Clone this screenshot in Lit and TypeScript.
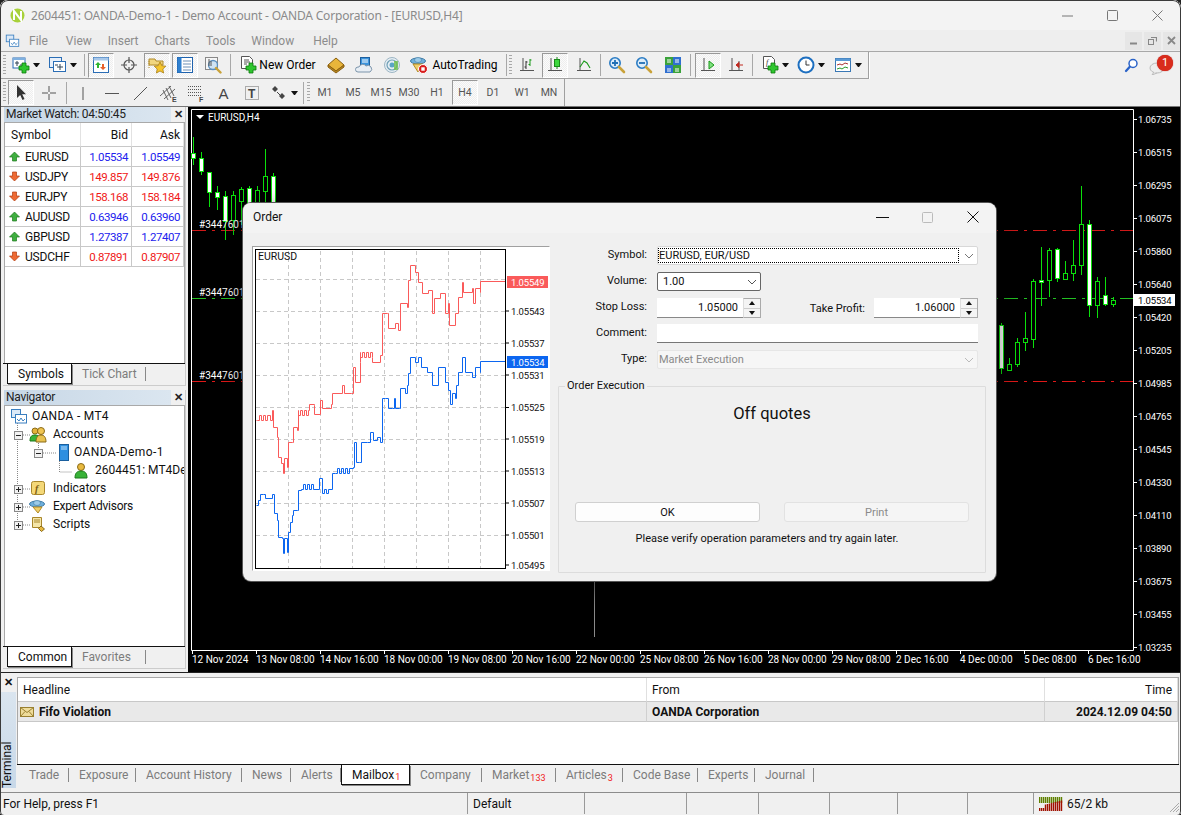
import { LitElement, html, css, svg } from "lit";

const ic = (b: any, size = 18) => html`<svg class="ic" width=${size} height=${size} viewBox="0 0 18 18">${b}</svg>`;
const plus = (x: number, y: number) => svg`<path d="M${x + 3} ${y}h4v3h3v4h-3v3h-4v-3h-3v-4h3z" fill="#2fc62f" stroke="#0a7a0a" stroke-width=".8"/>`;
const win = svg`<rect x="1" y="2" width="12" height="10" fill="#fff" stroke="#2a6db5"/><rect x="1" y="2" width="12" height="2" fill="#7fb0e0"/>`;
const glass = (inner: any) => svg`<circle cx="7" cy="7" r="5.2" fill="#dcecf9" stroke="#2b7cc4" stroke-width="1.6"/>${inner}<path d="M11 11l5 5" stroke="#c9a23a" stroke-width="2.6" stroke-linecap="round"/>`;
const axes = svg`<path d="M5 2v13M2 14.500h14" stroke="#555" fill="none"/>`;

const icons: Record<string, any> = {
  newChart: ic(svg`${win}<path d="M3 7h4M5 5v5M8 9h3" stroke="#345" />${plus(7, 7)}`),
  profiles: ic(svg`<rect x="0.500" y="1.500" width="12" height="10" fill="#e8f0fa" stroke="#2a6db5"/><rect x="4.500" y="5.500" width="12" height="10" fill="#fff" stroke="#2a6db5"/><path d="M6 9h3M8 11h6M11 8v6" stroke="#345"/>`),
  market: ic(svg`<rect x="1.500" y="1.500" width="15" height="15" fill="#fff" stroke="#2a6db5"/><rect x="1.500" y="1.500" width="15" height="3" fill="#a8c8ea"/><path d="M6 6l3 3h-2v3h-2v-3h-2z" fill="#2fb52f"/><path d="M11 14l-3-3h2v-3h2v3h2z" fill="#e8602a"/>`),
  target: ic(svg`<circle cx="9" cy="9" r="5" fill="none" stroke="#555" stroke-width="1.2"/><path d="M9 1v6M9 11v6M1 9h6M11 9h6" stroke="#555" stroke-width="1.2"/>`),
  folder: ic(svg`<path d="M1 3h6l1 2h7v4H1z" fill="#f1d680" stroke="#b08a2a"/><path d="M1 5v7" stroke="#b08a2a" stroke-dasharray="1 1"/><path d="M12 6l1.800 3.700 4 .5-3 2.800.8 4-3.600-2-3.600 2 .8-4-3-2.800 4-.5z" fill="#f5c52e" stroke="#a97f15" stroke-width=".8"/>`),
  list: ic(svg`<rect x="1.500" y="1.500" width="15" height="15" fill="#fff" stroke="#1f62ad"/><rect x="1.500" y="1.500" width="4" height="15" fill="#2f80d0"/><path d="M7 5h8M7 8h8M7 11h8M7 14h8" stroke="#6a8fb5"/>`),
  chartZoom: ic(svg`<rect x="1.500" y="1.500" width="12" height="12" fill="#f6f6f6" stroke="#888"/><circle cx="9" cy="9" r="4.500" fill="#cfe3f4" stroke="#5a8fc0" stroke-width="1.300"/><path d="M12 12l4.500 4.500" stroke="#c9a23a" stroke-width="2.400" stroke-linecap="round"/><path d="M5 3v7M7 5v5" stroke="#555"/>`),
  newOrder: ic(svg`<path d="M2.500 .5h8l3 3v9h-11z" fill="#fff" stroke="#555"/><path d="M5 4h5M5 6h6M5 8h3" stroke="#555"/>${plus(7, 7)}`),
  book: ic(svg`<path d="M1 9l8-7 8 7-8 6z" fill="#e8b53a" stroke="#8a5f10"/><path d="M1 9v2l8 6 8-6V9l-8 6z" fill="#b98a20" stroke="#8a5f10"/>`),
  cloud: ic(svg`<rect x="5.500" y="1.500" width="9" height="10" fill="#3b93dc" stroke="#1d5f9e"/><path d="M7 4h6M7 6h6" stroke="#fff"/><path d="M3 16a2.500 2.500 0 0 1 0-5h1a4 4 0 0 1 7-1 3.500 3.500 0 0 1 4 6z" fill="#e8eef4" stroke="#7d95ab"/>`),
  radio: ic(svg`<circle cx="9" cy="9" r="7.500" fill="#e6eef4" stroke="#9db6c4"/><circle cx="9" cy="9" r="5" fill="none" stroke="#6f9fb5" stroke-width="1.200"/><circle cx="9" cy="9" r="2.500" fill="#5aa5c5"/><path d="M11 5h4v9h-4z" fill="#6fc04a" opacity=".8"/>`),
  auto: ic(svg`<ellipse cx="8" cy="5" rx="7.500" ry="3" fill="#6fb0dc" stroke="#3d7aa5"/><ellipse cx="8" cy="4" rx="3.500" ry="2.500" fill="#9ccbe8" stroke="#3d7aa5" stroke-width=".6"/><path d="M3 8l5 8 5-8z" fill="#f0cf6a" stroke="#b28a25"/><circle cx="13" cy="13" r="4.500" fill="#d81e1e" stroke="#fff"/><rect x="11.300" y="11.300" width="3.400" height="3.400" fill="#fff"/>`),
  bar: ic(svg`${axes}<path d="M8 5v8M6.500 11H8M8 6h1.500" stroke="#333" fill="none"/><path d="M12 3v7M10.500 8.500H12M12 4h1.500" stroke="#1b9a1b" fill="none"/>`),
  candle: ic(svg`${axes}<path d="M11 1v12" stroke="#1a8a1a"/><rect x="8.500" y="3.500" width="5" height="7" fill="#3ed83e" stroke="#1a8a1a"/>`),
  line: ic(svg`${axes}<path d="M5 11l4-6 3 2 3 5" stroke="#1b9a1b" fill="none" stroke-width="1.100"/>`),
  zoomIn: ic(glass(svg`<path d="M7 4v6M4 7h6" stroke="#1f6fb5" stroke-width="1.800"/>`)),
  zoomOut: ic(glass(svg`<path d="M4 7h6" stroke="#1f6fb5" stroke-width="1.800"/>`)),
  tile: ic(svg`<rect x="1" y="1" width="8" height="8" fill="#3aa23a"/><rect x="9" y="1" width="8" height="8" fill="#2f6fd0"/><rect x="1" y="9" width="8" height="8" fill="#2f6fd0"/><rect x="9" y="9" width="8" height="8" fill="#3aa23a"/><path d="M3 4h4M11 4h4M3 13h4M11 13h4M3 6h4M11 6h4M3 15h4M11 15h4" stroke="#fff"/>`),
  shift: ic(svg`${axes}<path d="M10 5l5 4-5 4z" fill="#7fe07f" stroke="#1b9a1b"/>`),
  scroll: ic(svg`${axes}<path d="M12 5v9" stroke="#555"/><path d="M16 9h-3M9 9l3-2.500v5z" fill="#c0281e" stroke="#c0281e"/>`),
  newDoc: ic(svg`<path d="M2.500 .5h8l3 3v9h-11z" fill="#fff" stroke="#555"/><text x="5" y="9" font-size="8" font-style="italic" font-family="Liberation Serif" fill="#333">f</text>${plus(7, 7)}`),
  clock: ic(svg`<circle cx="9" cy="9" r="7.500" fill="#fff" stroke="#1d6fc0" stroke-width="2"/><path d="M9 4.500V9h3.500" stroke="#333" fill="none"/>`),
  indicators: ic(svg`<rect x="1.500" y="2.500" width="15" height="13" fill="#fff" stroke="#3a78b5"/><rect x="1.500" y="2.500" width="15" height="2.500" fill="#5b9ad5"/><path d="M3 9l3-1 2 1 3-2 3 1" stroke="#a33" fill="none"/><path d="M3 13l3-1 2 1 3-2 3 1" stroke="#2a9a2a" fill="none"/>`),
  search: ic(svg`<circle cx="11" cy="6.500" r="4" fill="#fff" stroke="#2a63c8" stroke-width="1.500"/><path d="M7.800 9.800L4 14" stroke="#2a63c8" stroke-width="2.300" stroke-linecap="round"/>`),
  cursor: ic(svg`<path d="M5 1v13l3.200-3 2.300 5 2-1-2.300-4.800H14z" fill="#333"/>`),
  cross: ic(svg`<path d="M9 2v6M9 10v6M2 9h6M10 9h6" stroke="#555"/>`),
  vline: ic(svg`<path d="M9 3v13" stroke="#555"/>`),
  hline: ic(svg`<path d="M2 9.500h14" stroke="#555"/>`),
  tline: ic(svg`<path d="M3 16L16 3" stroke="#555"/>`),
  channel: ic(svg`<path d="M1 12L12 2M5 15L16 5M4 6l5 10M7 4l5 10M10 2l5 10" stroke="#555" fill="none" stroke-width=".9"/><text x="13" y="18" font-size="7" font-weight="bold" font-family="Liberation Sans" fill="#444">E</text>`),
  fibo: ic(svg`<path d="M1 2.500h14M1 5.500h14M1 8.500h14M1 11.500h14" stroke="#555" stroke-dasharray="1 1"/><text x="12" y="18" font-size="7" font-weight="bold" font-family="Liberation Sans" fill="#444">F</text>`),
  atext: ic(svg`<text x="3.500" y="15" font-size="15" font-family="Liberation Sans" fill="#444">A</text>`),
  ttext: ic(svg`<rect x="2.500" y="2.500" width="13" height="13" fill="none" stroke="#666" stroke-dasharray="1 1"/><text x="5" y="14" font-size="12" font-weight="bold" font-family="Liberation Sans" fill="#444">T</text>`),
  arrows: ic(svg`<path d="M2 5l3-3 3 3-3 3zM9 12l3-3 3 3-3 3z" fill="#444"/><path d="M7 8l3 3" stroke="#444"/>`),
};

type Item = { x: number; w?: number; k?: string; ic?: string; on?: boolean; t?: string };
const tb1: Item[] = [
  { x: 4, k: "grip" }, { x: 21, ic: "newChart" }, { x: 36, k: "caret" }, { x: 58, ic: "profiles" }, { x: 73, k: "caret" }, { x: 84, k: "sep" },
  { x: 101, ic: "market", on: true }, { x: 129, ic: "target" }, { x: 157, ic: "folder", on: true }, { x: 185, ic: "list", on: true }, { x: 213, ic: "chartZoom" }, { x: 230, k: "sep" },
  { x: 248, ic: "newOrder" }, { x: 287.500, t: "New Order", w: 58 }, { x: 336, ic: "book" }, { x: 364, ic: "cloud" }, { x: 392, ic: "radio" }, { x: 419, ic: "auto" }, { x: 465, t: "AutoTrading", w: 68 },
  { x: 506, k: "sep" }, { x: 510, k: "grip" }, { x: 527, ic: "bar" }, { x: 555, ic: "candle", on: true }, { x: 584, ic: "line" }, { x: 600, k: "sep" },
  { x: 617, ic: "zoomIn" }, { x: 644, ic: "zoomOut" }, { x: 673, ic: "tile" }, { x: 690, k: "sep" }, { x: 708, ic: "shift", on: true }, { x: 736, ic: "scroll" }, { x: 752, k: "sep" },
  { x: 770, ic: "newDoc" }, { x: 785, k: "caret" }, { x: 806, ic: "clock" }, { x: 821, k: "caret" }, { x: 843, ic: "indicators" }, { x: 858, k: "caret" },
];
const tb2: Item[] = [
  { x: 4, k: "grip" }, { x: 21, ic: "cursor", on: true }, { x: 49, ic: "cross" }, { x: 66, k: "sep" }, { x: 83, ic: "vline" }, { x: 112, ic: "hline" }, { x: 140, ic: "tline" },
  { x: 168, ic: "channel" }, { x: 196, ic: "fibo" }, { x: 224, ic: "atext" }, { x: 252, ic: "ttext" }, { x: 279, ic: "arrows" }, { x: 294, k: "caret" }, { x: 303, k: "sep" }, { x: 308, k: "grip" },
  ...([["M1", 325], ["M5", 353], ["M15", 381], ["M30", 409], ["H1", 437], ["H4", 465], ["D1", 493], ["W1", 522], ["MN", 549]] as [string, number][]).map(([t, x]) => ({ x, t, w: 26, k: "tf", on: t === "H4" })),
];
const widths: Record<string, number> = { grip: 3, caret: 7, sep: 1 };
const band = (items: Item[]) => {
  let end = 0;
  return items.map((it) => {
    const w = it.w ?? (it.k && widths[it.k]) ?? 26;
    const ml = it.x - w / 2 - end;
    end = it.x + w / 2;
    const cls = `ti ${it.k ?? ""} ${it.on ? "on" : ""} ${it.t ? "txt" : ""}`;
    return html`<div class=${cls} style="width:${w}px;margin-left:${ml}px">${it.ic ? icons[it.ic] : it.t ?? ""}</div>`;
  });
};

const quotes = [
  ["EURUSD", "1.05534", "1.05549", 1], ["USDJPY", "149.857", "149.876", 0], ["EURJPY", "158.168", "158.184", 0],
  ["AUDUSD", "0.63946", "0.63960", 1], ["GBPUSD", "1.27387", "1.27407", 1], ["USDCHF", "0.87891", "0.87907", 0],
] as [string, string, string, number][];
const arrow = (up: number) => html`<svg class="arr" width="11" height="11" viewBox="0 0 11 11">${up
  ? svg`<path d="M5.500 1L10.500 6H7.500V10H3.500V6H.5z" fill="#3fae3f" stroke="#1c7a1c" stroke-width=".7"/>`
  : svg`<path d="M5.500 10L10.500 5H7.500V1H3.500V5H.5z" fill="#ee6a33" stroke="#b23c10" stroke-width=".7"/>`}</svg>`;

const navIc: Record<string, any> = {
  root: html`<svg width="18" height="16" viewBox="0 0 18 16"><rect x="1.500" y="1.500" width="9" height="8" fill="#dbe9f7" stroke="#3a7fc0"/><rect x="5.500" y="6.500" width="11" height="8.500" fill="#fff" stroke="#3a7fc0"/><path d="M7 11l2 2 2-3 2 3 2-2" stroke="#3a7fc0" fill="none"/></svg>`,
  accounts: html`<svg width="18" height="17" viewBox="0 0 18 17"><circle cx="6" cy="5" r="3" fill="#e3b23a" stroke="#8a6a18"/><path d="M1 15c0-5 2-6 5-6s5 1 5 6z" fill="#39b339" stroke="#1b7a1b"/><circle cx="12" cy="5" r="3.500" fill="#f0c552" stroke="#8a6a18"/><path d="M7 16c0-5 2-7 5-7s5 2 5 7z" fill="#e8c14e" stroke="#8a6a18"/></svg>`,
  server: html`<svg width="12" height="17" viewBox="0 0 12 17"><rect x="1.500" y=".5" width="9" height="16" fill="#2e8fe0" stroke="#1a5f9e"/><path d="M3 3h6M3 5h6" stroke="#bfe0fa"/></svg>`,
  user: html`<svg width="16" height="17" viewBox="0 0 16 17"><circle cx="8" cy="5" r="3.500" fill="#e8b93f" stroke="#8a6a18"/><path d="M2 16c0-5 2-7 6-7s6 2 6 7z" fill="#38b238" stroke="#1b7a1b"/></svg>`,
  ind: html`<svg width="16" height="16" viewBox="0 0 16 16"><rect x="1.500" y="1.500" width="13" height="13" rx="2" fill="#f4d878" stroke="#a8862a"/><text x="5" y="12" font-size="10" font-weight="bold" font-style="italic" font-family="Liberation Serif" fill="#7a5c10">f</text></svg>`,
  ea: html`<svg width="18" height="16" viewBox="0 0 18 16"><ellipse cx="8" cy="6" rx="7.500" ry="3" fill="#6fb0dc" stroke="#3d7aa5"/><ellipse cx="8" cy="5" rx="3.500" ry="2.500" fill="#9ccbe8" stroke="#3d7aa5" stroke-width=".6"/><path d="M4 9l5 6 4-6z" fill="#f0cf6a" stroke="#b28a25"/></svg>`,
  script: html`<svg width="16" height="16" viewBox="0 0 16 16"><path d="M2.500 1.500h9v10h-9z" fill="#f5e6a8" stroke="#a8862a"/><path d="M4 4h6M4 6h6" stroke="#a8862a"/><path d="M11 10l3.500 3-3 2.500-3-3z" fill="#e8b93f" stroke="#8a6a18"/></svg>`,
};
const tree = [
  { pad: 11, ic: "root", t: "OANDA - MT4", gap: 2, ls: .3 },
  { pad: 30, ic: "accounts", t: "Accounts", gap: 4, ls: 0 },
  { pad: 59, ic: "server", t: "OANDA-Demo-1", gap: 2, ls: .4 },
  { pad: 74, ic: "user", t: "2604451: MT4Demo", gap: 4, ls: 0 },
  { pad: 31, ic: "ind", t: "Indicators", gap: 5, ls: 0 },
  { pad: 30, ic: "ea", t: "Expert Advisors", gap: 4, ls: -.25 },
  { pad: 31, ic: "script", t: "Scripts", gap: 5, ls: 0 },
];

const tabs = (list: any[], first = 0) => html`<div class="tabs"><div style="width:${first}px"></div>${list.map((t) =>
  html`<div class="tab ${t.on ? "act" : ""}" style="width:${t.w}px">${t.t}${t.s ? html`<sub>${t.s}</sub>` : ""}</div>`)}</div>`;

const C: [number, number, number, number, number, number][] = [
  [193, 137, 165, 153, 158, 1], [201, 152, 175, 158, 171, 1], [209, 172, 207, 172, 192, 1], [217, 186, 210, 192, 197, 1], [225, 191, 240, 196, 221, 1], [233, 191, 235, 195, 220, 0],
  [241, 187, 225, 189, 201, 0], [249, 186, 225, 188, 210, 1], [257, 186, 225, 190, 210, 0], [265, 149, 203, 176, 191, 0], [273, 173, 210, 176, 203, 1],
  [1001, 323, 374, 325, 368, 1], [1009, 358, 370, 364, 370, 0], [1017, 338, 367, 342, 364, 0], [1025, 312, 351, 338, 342, 0], [1033, 279, 348, 281, 339, 0], [1041, 247, 306, 280, 282, 1],
  [1049, 248, 297, 250, 280, 0], [1057, 248, 282, 249, 278, 1], [1065, 261, 279, 273, 279, 0], [1073, 240, 281, 265, 273, 0], [1081, 186, 275, 224, 265, 0], [1089, 220, 317, 224, 305, 1],
  [1097, 277, 318, 281, 305, 0], [1105, 277, 306, 295, 304, 1], [1113, 297, 307, 300, 304, 0],
];
const axisP = ["1.06735", "1.06515", "1.06295", "1.06075", "1.05860", "1.05640", "1.05420", "1.05205", "1.04985", "1.04765", "1.04545", "1.04330", "1.04110", "1.03890", "1.03675", "1.03455", "1.03235"];
const axisT = ["12 Nov 2024", "13 Nov 08:00", "14 Nov 16:00", "18 Nov 00:00", "19 Nov 08:00", "20 Nov 16:00", "22 Nov 00:00", "25 Nov 08:00", "26 Nov 16:00", "28 Nov 00:00", "29 Nov 08:00", "2 Dec 16:00", "4 Dec 00:00", "5 Dec 08:00", "6 Dec 16:00"];

const z7 = (a: number[]) => a.reduce<number[][]>((r, v, i) => (i % 2 ? r : [...r, [245 + v / 3, 385 + a[i + 1] / 3]]), []);
const z6 = (a: number[]) => a.reduce<number[][]>((r, v, i) => (i % 2 ? r : [...r, [245 + v / 3, 200 + a[i + 1] / 3]]), []);
const comb = (x0: number, x1: number, y: number, amp: number) => {
  const out: number[][] = [];
  let up = false;
  for (let x = x0; x < x1; x += 2) { out.push([x, y + (up ? 0 : amp)]); up = !up; }
  return out;
};
const snap = (v: number) => Math.round(v) + 0.5;
const step = (p: number[][]) => `M${snap(p[0][0])} ${snap(p[0][1])}` + p.slice(1).map((q) => `H${snap(q[0])}V${snap(q[1])}`).join("");
const red = step([
  ...z7([32, 105]), ...comb(257, 269, 415, 5), ...z7([75, 105, 80, 75, 85, 125, 95, 155, 100, 215, 108, 235, 113, 265, 118, 220, 125, 245, 130, 170, 140, 170, 145, 125, 155, 135, 160, 75]),
  ...comb(298, 309, 410, 5), ...z7([193, 58, 208, 60, 208, 88, 225, 45, 230, 70, 258, 58, 262, 25, 290, 25, 292, 0, 297, 25, 318, 25]),
  ...z6([325, 500, 330, 545, 345, 485, 345, 455]), ...comb(360, 373, 352, 5), ...z6([380, 485, 405, 465, 410, 340, 425, 340, 430, 385, 450, 370, 460, 390, 465, 310, 485, 322, 490, 240, 495, 195, 510, 215, 520, 245, 530, 280, 550, 270, 560, 340, 568, 295, 585, 278, 600, 340, 608, 310, 612, 375, 630, 340, 640, 290, 650, 245, 655, 275, 680, 265, 685, 310, 690, 265, 705, 275, 706, 243, 780, 243]),
]);
const blue = step([
  ...z7([32, 360, 38, 345, 45, 328, 55, 328, 60, 340, 80, 328, 88, 385, 97, 405, 100, 455, 110, 460, 113, 505, 118, 460, 125, 500, 130, 440, 135, 410, 140, 390, 145, 375, 155, 375, 160, 315]),
  ...comb(301, 314, 484, 5), ...z7([222, 280]), ...comb(322, 330, 489, 4), ...z7([260, 265]), ...comb(335, 350, 468, 5), ...z7([325, 245, 328, 170, 332, 230, 342, 230, 347, 170, 365, 170, 375, 140, 385, 165, 395, 155, 405, 170, 410, 40, 420, 40, 430, 70, 440, 70, 447, 40, 450, 70, 462, 70, 466, 10, 480, 25, 487, 0]),
  ...z6([490, 520, 495, 470, 510, 485, 520, 470, 528, 500, 545, 515, 560, 555, 580, 500, 600, 545, 610, 570]),
  ...z7([615, 58, 620, 25, 630, 40, 632, 0]),
  ...z6([640, 515, 652, 470, 660, 515, 680, 530, 690, 500, 705, 515, 706, 484, 780, 484]),
]);
const miniY = [[311, "1.05543"], [343, "1.05537"], [375, "1.05531"], [407.5, "1.05525"], [439, "1.05519"], [471, "1.05513"], [503, "1.05507"], [535, "1.05501"], [565, "1.05495"]] as [number, string][];
const exp = [[9, 25, "m"], [29, 43, "m"], [9, 79, "p"], [9, 97, "p"], [9, 115, "p"]] as [number, number, string][];

class AppRoot extends LitElement {
  static styles = css`
    :host { display:block; width:1181px; height:815px; background:#222; font:12px Roboto,"Noto Sans",sans-serif; color:#111; overflow:hidden; }
    * { box-sizing:border-box; }
    svg { display:block; flex:none; }
    .win { width:1181px; height:815px; background:#f0f0f0; border-radius:8px 8px 4px 4px; display:flex; flex-direction:column; overflow:hidden; position:relative; }
    .win::after { content:""; position:absolute; inset:0; border:1px solid #3a3a3a; border-bottom:none; border-radius:8px 8px 4px 4px; pointer-events:none; }
    .title { height:30px; background:#f3f3f3; display:flex; align-items:center; padding-left:10px; color:#8a8a8a; flex:none; }
    .title .t { margin-left:6px; flex:1; white-space:nowrap; font-family:"Noto Sans",sans-serif; letter-spacing:-.19px; }
    .wbtns { display:flex; width:135px; margin-right:1.500px; }
    .wbtns div { width:45px; display:flex; justify-content:center; }
    .menu { height:22px; flex:none; background:#eeeeee; display:flex; align-items:center; padding-left:5px; border-bottom:1px solid #a8a8a8; color:#8c8c8c; }
    .menu span { flex:none; margin-left:16px; }
    .menu span:nth-of-type(1) { margin-left:9px; }
    .menu span:nth-of-type(2) { margin-left:18px; }
    .menu span:nth-of-type(7) { margin-left:19px; }
    .mdi { margin-left:auto; display:flex; gap:2px; height:18px; margin-right:1px; }
    .mdi div { width:17px; background:#e6e6e6; display:flex; align-items:center; justify-content:center; }
    .tbrow { height:27px; flex:none; display:flex; background:#f0f0f0; }
    .band { height:27px; display:flex; align-items:center; border-right:1px solid #a0a0a0; border-bottom:1px solid #a0a0a0; box-shadow:1px 1px 0 #fff; flex:none; }
    .ti { height:25px; display:flex; align-items:center; justify-content:center; flex:none; }
    .ti.sep { height:22px; background:#a8a8a8; }
    .ti.grip { height:21px; background:repeating-linear-gradient(#a8a8a8 0 1px, transparent 1px 3px); }
    .ti.caret { height:0; width:7px; border-left:3.5px solid transparent; border-right:3.5px solid transparent; border-top:4px solid #111; }
    .ti.on { background:#f6f6f6 repeating-conic-gradient(#eee 0 25%, #fbfbfb 0 50%) 0 0/2px 2px; border:1px solid; border-color:#999 #fff #fff #999; }
    .ti.txt { white-space:nowrap; color:#000; }
    .ti.tf { color:#555; font-size:10.500px; }
    .rt { margin-left:auto; display:flex; align-items:center; padding-right:14px; position:relative; }
    .badge { position:absolute; left:35px; top:3px; width:16px; height:16px; border-radius:50%; background:#d92c1c; color:#fff; font-size:11px; text-align:center; line-height:16px; box-shadow:0 0 1px #a00; }
    .main { height:566px; flex:none; display:flex; background:#000; border-top:1px solid #777; }
    .left { width:188px; flex:none; background:#f0f0f0; display:flex; flex-direction:column; padding:0 2px 0 3px; }
    .pane { border:1px solid #ccc; border-width:0 1px 1px 0; display:flex; flex-direction:column; background:#f0f0f0; }
    .ph { height:15px; display:flex; align-items:center; justify-content:space-between; flex:none; padding-right:2px; color:#222; line-height:15px; }
    .ph span { flex:1; background:linear-gradient(90deg,#c7d7e6,#dbe6f0); margin-right:3px; padding-left:2px; height:15px; margin-left:1px; letter-spacing:-.3px; }
    .ph b { font:bold 11px "Liberation Sans"; }
    .content { flex:1; background:#fff; border:1px solid #a9a9a9; border-width:1px 1px 0 1px; margin-left:1px; overflow:hidden; position:relative; }
    .mw { display:grid; grid-template-columns:76px 51px 52px; grid-template-rows:24px; grid-auto-rows:20px; }
    .mw > div { display:flex; align-items:center; border:1px solid #c8c8c8; border-width:0 1px 1px 0; white-space:nowrap; }
    .mw .h { border-color:#e2e2e2; border-bottom-color:#c8c8c8; }
    .mw .r { justify-content:flex-end; padding-right:3px; }
    .mw .v { font-size:11.500px; letter-spacing:-.45px; }
    .mw .sym { padding-left:4px; gap:5px; letter-spacing:-.2px; }
    .blue { color:#2222ee; } .redt { color:#f01818; }
    .tabs { height:22px; flex:none; display:flex; border-top:1px solid #111; background:#f0f0f0; }
    .tab { height:20px; flex:none; display:flex; align-items:center; padding-left:10px; color:#7c7c7c; position:relative; white-space:nowrap; }
    .tab::after { content:""; position:absolute; right:0; top:3px; height:14px; width:1px; background:#888; }
    .tab.act { background:#fff; color:#111; border:1px solid #111; border-top:none; box-shadow:1px 1px 0 #888; }
    .tab.act::after { display:none; }
    .tab sub { color:#f01818; font-size:9px; margin:6px 0 0 1px; line-height:9px; }
    .tr { height:18px; display:flex; align-items:center; white-space:nowrap; position:relative; }
    .tree { padding-top:1px; }
    .tree-lines { position:absolute; left:0; top:0; }
    .chart { width:993px; flex:none; position:relative; background:#000; }
    .chart text { font:10px Roboto,sans-serif; fill:#fff; }
    .chart text.p { font-size:9.500px; letter-spacing:-.15px; }
    .dialog { position:absolute; left:55px; top:96px; width:753px; height:378px; background:#f0f0f0; border-radius:8px; box-shadow:0 0 0 1px #555, 0 8px 24px rgba(0,0,0,.6); color:#111; display:flex; flex-direction:column; overflow:hidden; }
    .dt { height:30px; flex:none; background:#f3f3f3; display:flex; align-items:center; padding:0 0 2px 10px; }
    .dt span { flex:1; }
    .dbtns { display:flex; align-items:center; }
    .dbody { display:flex; padding:13px 0 0 9px; }
    .mini { width:298px; height:325px; flex:none; background:#fff; border:1px solid; border-color:#a0a0a0 #fff #fff #a0a0a0; }
    .chart .mini text { font:9.500px Roboto,sans-serif; fill:#111; letter-spacing:-.15px; }
    .chart .mini text.w { fill:#fff; }
    .chart .mini text.lg { font-size:10.500px; letter-spacing:0; }
    .form { width:428px; margin-left:8px; flex:none; font-size:11px; }
    .fg { display:grid; grid-template-columns:89px 321px; column-gap:10px; grid-auto-rows:20px; row-gap:6px; align-items:start; }
    .fg label { text-align:right; line-height:18px; }
    .box { height:19px; background:#fff; border:1px solid #d8d8d8; border-radius:2px; display:flex; align-items:center; padding:0 3px 0 0; position:relative; }
    .box .chev { margin-left:auto; }
    .box.vol { width:104px; border:1px solid #666; padding-left:5px; }
    .focusd { flex:1; height:15px; border:1px dotted #000; line-height:14px; margin-right:5px; }
    .box.dis { background:#f6f6f6; color:#8a8a8a; border-color:#e6e6e6; padding-left:1px; }
    .comment { height:19px; background:#fff; border-bottom:1px solid #777; }
    .stops { display:flex; align-items:center; }
    .num { width:86px; height:20px; background:#fff; border-bottom:1px solid #888; text-align:right; line-height:19px; padding-right:5px; }
    .spin { width:18px; height:20px; border:1px solid #aaa; border-left:1px solid #ddd; display:flex; flex-direction:column; background:#f4f4f4; }
    .spin i { flex:1; display:flex; align-items:center; justify-content:center; }
    .spin i + i { border-top:1px solid #ccc; }
    .up { width:0; height:0; border:3px solid transparent; border-top:none; border-bottom:4px solid #111; }
    .dn { width:0; height:0; border:3px solid transparent; border-bottom:none; border-top:4px solid #111; }
    .tp { margin-left:auto; margin-right:9px; }
    .fs { margin:8px 0 0; padding:0; height:195px; border:1px solid #dcdcdc; border-radius:1px; display:flex; flex-direction:column; min-width:0; }
    legend { margin-left:6px; padding:0 2px; line-height:16px; }
    .off { text-align:center; font-size:16.500px; line-height:22px; margin-top:9px; }
    .btns { display:flex; gap:24px; padding:0 16px; margin-top:77px; }
    .btn { width:186px; height:20px; border:1px solid #d0d0d0; border-radius:3px; background:#fdfdfd; display:flex; align-items:center; justify-content:center; font-size:11px; }
    .btn.dis { background:#f5f5f5; border-color:#e2e2e2; color:#8a8a8a; }
    .note { text-align:center; padding-right:10px; margin-top:9px; line-height:16px; }
    .term { height:120px; flex:none; display:flex; background:#f0f0f0; border-top:1px solid #222; }
    .tl { width:17px; flex:none; display:flex; flex-direction:column; padding-right:1px; }
    .tl b { height:16px; font:bold 11px "Liberation Sans"; display:flex; justify-content:center; align-items:center; margin-top:1px; }
    .tl div { margin-top:2px; height:96px; background:linear-gradient(#c8d8e8,#dae5ef); writing-mode:vertical-rl; transform:rotate(180deg); line-height:15px; }
    .tc { flex:1; display:flex; flex-direction:column; padding:4px 2px 4px 0; min-width:0; }
    .mt { height:87px; background:#fff; border:1px solid #a8a8a8; border-bottom:none; flex:none; }
    .mr { display:grid; grid-template-columns:629px 398px 1fr; }
    .mr > div { height:24px; display:flex; align-items:center; padding:0 5px; border:1px solid #e0e0e0; border-width:0 1px 1px 0; border-bottom-color:#c8c8c8; }
    .mr.b > div { height:20px; background:#e9e9e9; font-weight:bold; border-color:#d0d0d0; border-bottom-color:#c8c8c8; }
    .mr .rr { justify-content:flex-end; }
    .status { height:22px; flex:none; border-top:1px solid #8c8c8c; background:#f0f0f0; display:flex; align-items:center; position:relative; }
    .cell { height:21px; flex:none; display:flex; align-items:center; padding-left:5px; border-right:1px solid #999; white-space:nowrap; gap:4px; }
    .sgrip { position:absolute; right:1px; bottom:1px; }
  `;

  render() {
    const hTabs = [{ t: "Trade", w: 50 }, { t: "Exposure", w: 67 }, { t: "Account History", w: 106 }, { t: "News", w: 49 }, { t: "Alerts", w: 50 }, { t: "Mailbox", s: "1", w: 69, on: true }, { t: "Company", w: 72 }, { t: "Market", s: "133", w: 74 }, { t: "Articles", s: "3", w: 67 }, { t: "Code Base", w: 75 }, { t: "Experts", w: 57 }, { t: "Journal", w: 59 }];
    return html`<div class="win">
      <div class="title">
        <svg width="15" height="15" viewBox="0 0 15 15"><circle cx="7.500" cy="7.500" r="7" fill="#a8d13a"/><path d="M4 12V3l7 9V3" stroke="#fff" stroke-width="2" fill="none"/></svg>
        <div class="t">2604451: OANDA-Demo-1 - Demo Account - OANDA Corporation - [EURUSD,H4]</div>
        <div class="wbtns">
          <div><svg width="11" height="11" viewBox="0 0 11 11"><path d="M0 6h11" stroke="#777"/></svg></div>
          <div><svg width="11" height="11" viewBox="0 0 11 11"><rect x=".5" y=".5" width="10" height="10" rx="1" fill="none" stroke="#777"/></svg></div>
          <div><svg width="11" height="11" viewBox="0 0 11 11"><path d="M.5.5l10 10M10.500.5l-10 10" stroke="#777"/></svg></div>
        </div>
      </div>
      <div class="menu">
        <svg width="15" height="15" viewBox="0 0 18 16"><rect x="1.500" y="1.500" width="9" height="8" fill="#dbe9f7" stroke="#3a7fc0"/><rect x="5.500" y="6.500" width="11" height="8.500" fill="#fff" stroke="#3a7fc0"/><path d="M7 11l2 2 2-3 2 3 2-2" stroke="#3a7fc0" fill="none"/></svg>
        <span>File</span><span>View</span><span>Insert</span><span>Charts</span><span>Tools</span><span>Window</span><span>Help</span>
        <div class="mdi">
          <div><svg width="9" height="9" viewBox="0 0 9 9"><path d="M1 7.500h7" stroke="#888" stroke-width="2"/></svg></div>
          <div><svg width="9" height="9" viewBox="0 0 9 9"><rect x=".5" y="3.500" width="5" height="5" fill="none" stroke="#888"/><path d="M3 1.500h5.500v4" fill="none" stroke="#888" stroke-width="1.200"/></svg></div>
          <div><svg width="9" height="9" viewBox="0 0 9 9"><path d="M1 1l7 7M8 1l-7 7" stroke="#888" stroke-width="1.800"/></svg></div>
        </div>
      </div>
      <div class="tbrow">
        <div class="band" style="width:869px">${band(tb1)}</div>
        <div class="rt">
          ${icons.search}
          <div style="width:7px"></div>
          <svg width="20" height="18" viewBox="0 0 20 18"><ellipse cx="10" cy="11" rx="7" ry="5" fill="#eee" stroke="#bbb"/><path d="M7 15l-2 3 5-2" fill="#eee" stroke="#bbb"/></svg>
          <div class="badge">1</div>
        </div>
      </div>
      <div class="tbrow"><div class="band" style="width:565px;border-bottom:none;box-shadow:none">${band(tb2)}</div></div>
      <div class="main">
        <div class="left">
          <div class="pane" style="height:279px">
            <div class="ph"><span>Market Watch: 04:50:45</span><b>✕</b></div>
            <div class="content" style="flex:none;height:241px">
              <div class="mw">
                <div class="h" style="padding-left:6px">Symbol</div><div class="h r">Bid</div><div class="h r">Ask</div>
                ${quotes.map(([s, b, a, up]) => html`<div class="sym">${arrow(up)}${s}</div><div class="r v ${up ? "blue" : "redt"}">${b}</div><div class="r v ${up ? "blue" : "redt"}">${a}</div>`)}
              </div>
            </div>
            ${tabs([{ t: "Symbols", w: 65, on: true }, { t: "Tick Chart", w: 74 }], 4)}
          </div>
          <div style="height:4px;flex:none"></div>
          <div class="pane" style="height:279px">
            <div class="ph"><span>Navigator</span><b>✕</b></div>
            <div class="content tree">
              <svg class="tree-lines" width="180" height="150"><path d="M12.500 17v98M33.500 35v8M54.500 55v11H67M18 29h7M38 47h14M18 83h7M18 101h7M18 119h7" stroke="#888" stroke-dasharray="1 1" fill="none"/>
                ${exp.map(([x, y, k]) => svg`<rect x=${x + .5} y=${y + .5} width="8" height="8" fill="#f2f2f2" stroke="#888"/><path d=${k === "m" ? `M${x + 2} ${y + 4.5}h5` : `M${x + 2} ${y + 4.5}h5M${x + 4.5} ${y + 2}v5`} stroke="#222"/>`)}
              </svg>
              ${tree.map((r) => html`<div class="tr" style="padding-left:${r.pad - 6}px">${navIc[r.ic]}<span style="margin-left:${r.gap + 2}px;letter-spacing:${r.ls}px">${r.t}</span></div>`)}
            </div>
            ${tabs([{ t: "Common", w: 65, on: true }, { t: "Favorites", w: 74 }], 4)}
          </div>
        </div>
        <div class="chart">
          <svg width="993" height="565" viewBox="188 107 993 565">
            <path d="M191.500 109.500H1133.500V650.500H191.500z" fill="none" stroke="#fff"/>
            <path d="M192 230.500H1133" stroke="#d01818" stroke-dasharray="14 6 3 6"/>
            <path d="M192 298.500H1133" stroke="#22c022" stroke-dasharray="14 6 3 6"/>
            <path d="M192 381.500H1133" stroke="#e01818" stroke-dasharray="14 6 3 6"/>
            <path d="M594.500 560V637" stroke="#8a8a8a"/>
            ${C.map(([x, a, b, t, e, w]) => svg`<path d="M${x + .5} ${a}V${b}" stroke="#0be00b"/><rect x=${x - 1.5} y=${t + .5} width="4" height=${Math.max(e - t, 1)} fill=${w ? "#fff" : "#000"} stroke="#0be00b"/>`)}
            <path d="M196 115h8l-4 4z" fill="#fff"/>
            <text x="208" y="120.500">EURUSD,H4</text>
            <text x="199" y="228">#34476011</text><text x="199" y="296">#34476011</text><text x="199" y="379">#34476011</text>
            ${axisP.map((p, i) => { const y = 119.5 + i * 33; return svg`<path d="M1133 ${y}h4" stroke="#fff"/><text class="p" x="1138" y=${y + 3.5}>${p}</text>`; })}
            <rect x="1134" y="294" width="41" height="12" fill="#fff"/>
            <text class="p" x="1138" y="303.500" style="fill:#000">1.05534</text>
            ${axisT.map((t, i) => { const x = 192 + i * 64; return svg`<path d="M${x + .5} 650v4" stroke="#fff"/><text x=${x} y="663">${t}</text>`; })}
          </svg>
          <div class="dialog">
            <div class="dt"><span>Order</span>
              <div class="dbtns">
                <svg width="13" height="13" viewBox="0 0 13 13"><path d="M0 6.500h13" stroke="#111"/></svg>
                <svg style="margin-left:33px" width="11" height="11" viewBox="0 0 11 11"><rect x=".5" y=".5" width="10" height="10" rx="1" fill="none" stroke="#bbb"/></svg>
                <svg style="margin:0 17px 0 34px" width="12" height="12" viewBox="0 0 12 12"><path d="M.5.5l11 11M11.500.5l-11 11" stroke="#111"/></svg>
              </div>
            </div>
            <div class="dbody">
              <div class="mini">
                <svg width="296" height="323" viewBox="253 247 296 323">
                  <g stroke="#c8c8c8" stroke-dasharray="4 3" fill="none">
                    ${[288, 320, 352, 384, 416, 448, 480].map((x) => svg`<path d="M${x + .5} 251V568"/>`)}
                    ${[279, 311, 343, 375, 407, 439, 471, 503, 535].map((y) => svg`<path d="M256 ${y + .5}H505"/>`)}
                  </g>
                  <path d=${red} fill="none" stroke="#fa5a5a" stroke-width="1"/>
                  <path d=${blue} fill="none" stroke="#0c66f0" stroke-width="1"/>
                  <rect x="255.500" y="249.500" width="250" height="319" fill="none" stroke="#000"/>
                  <text class="lg" x="258" y="260">EURUSD</text>
                  ${miniY.map(([y, t]) => svg`<path d="M505 ${y}h4" stroke="#000"/><text x="511" y=${y + 3.5}>${t}</text>`)}
                  <rect x="507" y="276" width="41" height="12" fill="#fa5a5a"/><text class="w" x="511" y="285.500">1.05549</text>
                  <rect x="507" y="356" width="41" height="12" fill="#0c66f0"/><text class="w" x="511" y="365.500">1.05534</text>
                </svg>
              </div>
              <div class="form">
                <div class="fg">
                  <label>Symbol:</label>
                  <div class="box"><div class="focusd">EURUSD, EUR/USD</div><svg class="chev" width="10" height="6" viewBox="0 0 10 6"><path d="M1 1l4 4 4-4" stroke="#777" fill="none"/></svg></div>
                  <label>Volume:</label>
                  <div class="box vol">1.00<svg class="chev" width="10" height="6" viewBox="0 0 10 6"><path d="M1 1l4 4 4-4" stroke="#555" fill="none"/></svg></div>
                  <label>Stop Loss:</label>
                  <div class="stops"><div class="num">1.05000</div><div class="spin"><i><b class="up"></b></i><i><b class="dn"></b></i></div><div class="tp">Take Profit:</div><div class="num">1.06000</div><div class="spin"><i><b class="up"></b></i><i><b class="dn"></b></i></div></div>
                  <label>Comment:</label>
                  <div class="comment"></div>
                  <label>Type:</label>
                  <div class="box dis">Market Execution<svg class="chev" width="10" height="6" viewBox="0 0 10 6"><path d="M1 1l4 4 4-4" stroke="#bbb" fill="none"/></svg></div>
                </div>
                <fieldset class="fs">
                  <legend>Order Execution</legend>
                  <div class="off">Off quotes</div>
                  <div class="btns"><div class="btn">OK</div><div class="btn dis">Print</div></div>
                  <div class="note">Please verify operation parameters and try again later.</div>
                </fieldset>
              </div>
            </div>
          </div>
        </div>
      </div>
      <div class="term">
        <div class="tl"><b>✕</b><div>Terminal</div></div>
        <div class="tc">
          <div class="mt">
            <div class="mr"><div>Headline</div><div>From</div><div class="rr">Time</div></div>
            <div class="mr b"><div style="padding-left:2px;gap:5px"><svg width="14" height="11" viewBox="0 0 14 11"><rect x=".5" y="1.500" width="13" height="9" fill="#efdc9a" stroke="#9a8030"/><path d="M.5 1.500L7 6.500l6.500-5M.5 10.500L5 5.500M13.500 10.500L9 5.500" fill="none" stroke="#9a8030"/></svg>Fifo Violation</div><div>OANDA Corporation</div><div class="rr">2024.12.09 04:50</div></div>
          </div>
          ${tabs(hTabs, 2)}
        </div>
      </div>
      <div class="status">
        <div class="cell" style="width:468px;padding-left:3px">For Help, press F1</div>
        <div class="cell" style="width:117px">Default</div>
        <div class="cell" style="width:102px"></div><div class="cell" style="width:72px"></div><div class="cell" style="width:71px"></div><div class="cell" style="width:68px"></div><div class="cell" style="width:70px"></div><div class="cell" style="width:66px"></div>
        <div class="cell" style="border:none">
          <svg width="24" height="16" viewBox="0 0 24 16"><path d=${Array.from({ length: 12 }, (_, i) => `M${i * 2 + .5} 1v6`).join("")} stroke="#5f8000" stroke-width="1.400"/><path d=${Array.from({ length: 12 }, (_, i) => `M${i * 2 + .5} 15v-${i < 3 ? 3 : 5 + i / 2}`).join("")} stroke="#a01000" stroke-width="1.400"/></svg>65/2 kb
        </div>
        <svg class="sgrip" width="12" height="12" viewBox="0 0 12 12"><path d="M11 2L2 11M11 5L5 11M11 8L8 11" stroke="#aaa"/></svg>
      </div>
    </div>`;
  }
}
customElements.define("app-root", AppRoot);
